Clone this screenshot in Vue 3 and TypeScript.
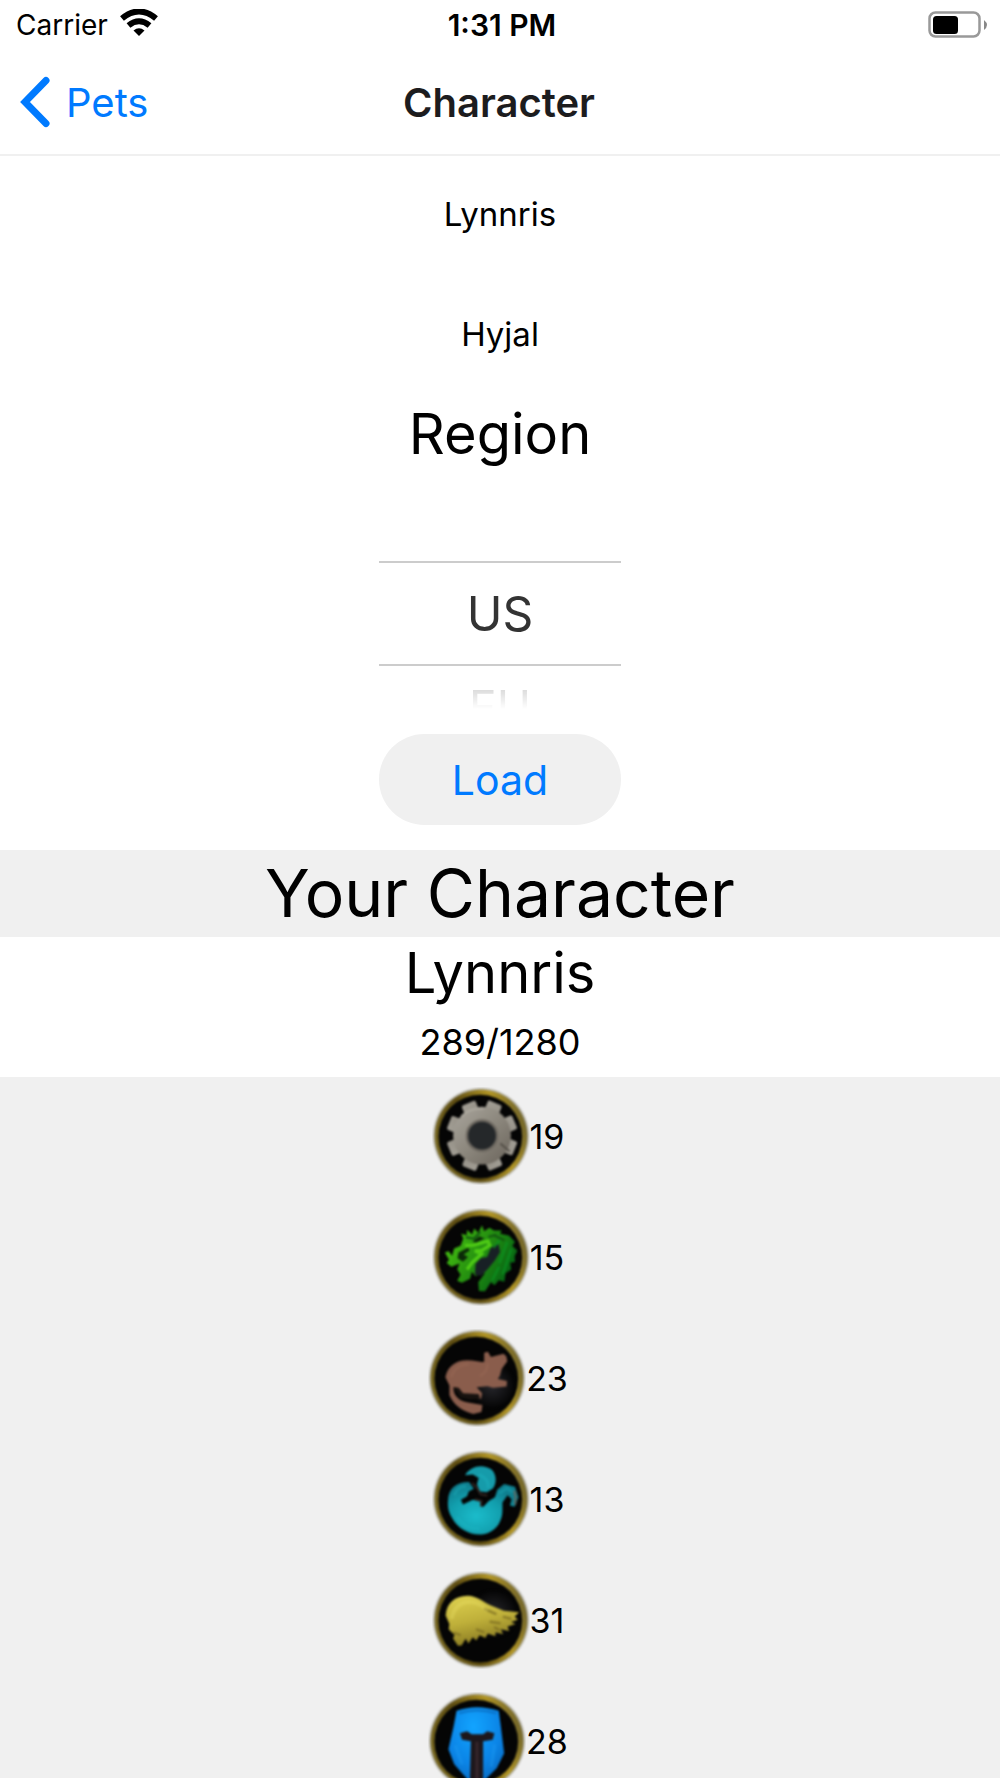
<script setup lang="ts">
import { ref } from 'vue'

type Family = 'mechanical' | 'dragonkin' | 'critter' | 'magic' | 'beast' | 'humanoid'

interface PetCount {
  family: Family
  count: number
  cx: number
  cy: number
}

const characterName = ref('Lynnris')
const realm = ref('Hyjal')
const region = ref('US')

const families: PetCount[] = [
  { family: 'mechanical', count: 19, cx: 178, cy: 168 },
  { family: 'dragonkin', count: 15, cx: 178, cy: 170 },
  { family: 'critter', count: 23, cx: 175, cy: 172 },
  { family: 'magic', count: 13, cx: 178, cy: 175 },
  { family: 'beast', count: 31, cx: 178, cy: 178 },
  { family: 'humanoid', count: 28, cx: 172, cy: 180 },
]

const teeth = [0, 45, 90, 135, 180, 225, 270, 315]
</script>

<template>
  <div class="screen">
    <header>
      <div class="status">
        <div class="carrier">
          <span>Carrier</span>
          <svg width="38" height="28" viewBox="0 0 38 28" aria-hidden="true">
            <path d="M2 9.500Q19-4.500 36 9.500" fill="none" stroke="#000" stroke-width="6" />
            <path d="M8.500 16.500Q19 8 29.500 16.500" fill="none" stroke="#000" stroke-width="6" />
            <path d="M13.500 21.500Q19 17 24.500 21.500L19 27Z" />
          </svg>
        </div>
        <time>1:31 PM</time>
        <div class="power">
          <svg width="60" height="28" viewBox="0 0 60 28" aria-hidden="true">
            <rect x="1.500" y="1.500" width="50" height="24" rx="6" fill="none" stroke="#999" stroke-width="2.500" />
            <rect x="5" y="5" width="25" height="18" rx="3.500" />
            <path d="M56 9Q62 14 56 19Z" fill="#888" />
          </svg>
        </div>
      </div>
      <nav>
        <a class="back" href="#pets">
          <svg width="32" height="52" viewBox="0 0 32 52" aria-hidden="true">
            <path d="M28 4.500L7 26L28 47.500" fill="none" stroke="#007aff" stroke-width="7" stroke-linecap="round" stroke-linejoin="miter" />
          </svg>
          <span>Pets</span>
        </a>
        <h1>Character</h1>
      </nav>
    </header>

    <main>
      <form @submit.prevent>
        <input v-model="characterName" class="field" type="text" aria-label="Character name" />
        <input v-model="realm" class="field" type="text" aria-label="Realm" />
        <label class="region-label" for="region">Region</label>
        <div class="wheel">
          <select id="region" v-model="region">
            <option>US</option>
            <option>EU</option>
          </select>
          <span class="next" aria-hidden="true">EU</span>
        </div>
        <button type="submit">Load</button>
      </form>

      <h2>Your Character</h2>
      <section class="summary">
        <h3>Lynnris</h3>
        <p>289/1280</p>
      </section>

      <ul>
        <li v-for="pet in families" :key="pet.family">
          <svg
            class="emblem"
            :viewBox="`${pet.cx - 144} ${pet.cy - 144} 288 288`"
            role="img"
            :aria-label="pet.family"
          >
            <defs>
              <linearGradient :id="`rim-${pet.family}`" x1="0" y1="0.600" x2="1" y2="0.300">
                <stop offset="0" stop-color="#75651f" />
                <stop offset="0.350" stop-color="#5e4d12" />
                <stop offset="0.700" stop-color="#b09424" />
                <stop offset="1" stop-color="#6b602c" />
              </linearGradient>
              <linearGradient id="steel" gradientUnits="userSpaceOnUse" x1="110" y1="95" x2="250" y2="240">
                <stop offset="0" stop-color="#a5a198" />
                <stop offset="0.500" stop-color="#8c877d" />
                <stop offset="1" stop-color="#6f6960" />
              </linearGradient>
              <linearGradient id="scale" x1="0" y1="0" x2="1" y2="0.500">
                <stop offset="0" stop-color="#4fd012" />
                <stop offset="0.450" stop-color="#2c9a10" />
                <stop offset="1" stop-color="#066614" />
              </linearGradient>
              <radialGradient id="orb" cx="0.400" cy="0.650" r="0.600">
                <stop offset="0" stop-color="#1bbccb" />
                <stop offset="0.600" stop-color="#129fae" />
                <stop offset="1" stop-color="#0f7f8f" />
              </radialGradient>
              <linearGradient id="claw" x1="0.200" y1="0" x2="0.500" y2="1">
                <stop offset="0" stop-color="#dccf4e" />
                <stop offset="0.500" stop-color="#bfb03a" />
                <stop offset="1" stop-color="#857620" />
              </linearGradient>
              <radialGradient id="visor" cx="0.450" cy="0.250" r="0.800">
                <stop offset="0" stop-color="#12a4ff" />
                <stop offset="0.600" stop-color="#0b84e6" />
                <stop offset="1" stop-color="#0767bd" />
              </radialGradient>
              <radialGradient id="sheen">
                <stop offset="0" stop-color="#26262b" />
                <stop offset="1" stop-color="#050505" />
              </radialGradient>
            </defs>

            <g class="soft">
              <circle :cx="pet.cx" :cy="pet.cy" r="141" fill="#8d8a78" opacity="0.600" />
              <circle :cx="pet.cx" :cy="pet.cy" r="136" :fill="`url(#rim-${pet.family})`" />
              <circle :cx="pet.cx - 2" :cy="pet.cy + 2" r="123" fill="#050505" />
            </g>

            <g v-if="pet.family === 'mechanical'" class="soft">
              <g fill="url(#steel)">
                <rect
                  v-for="angle in teeth"
                  :key="angle"
                  x="159"
                  y="63"
                  width="44"
                  height="50"
                  rx="6"
                  :transform="`rotate(${angle + 22} 181 167)`"
                />
                <circle cx="181" cy="167" r="85" />
              </g>
              <circle cx="181" cy="167" r="48" fill="#6d6860" />
              <circle cx="181" cy="167" r="41" fill="#25282a" />
              <path d="M120 110Q145 85 185 88" fill="none" stroke="#b8b3aa" stroke-width="7" opacity="0.500" />
              <path d="M235 190L262 213" stroke="#514c45" stroke-width="5" />
            </g>

            <g v-else-if="pet.family === 'dragonkin'" class="soft">
              <path
                d="M72 157L83 153L93 166L99 145L118 137L126 116L120 102L136 106L137 91L152 104L158 86L170 99L181 77L187 94L203 84L216 92L239 92L234 102L260 107L278 126L270 137L285 152L277 167L278 185L264 187L267 207L250 218L247 243L230 238L218 253L207 244L190 271L172 270L170 244L190 217L161 226L151 213L146 234L122 246L108 240L118 222L108 206L115 189L91 199L77 188L84 178Z"
                fill="url(#scale)"
              />
              <path d="M207 143L229 132L234 155L218 181L198 205L179 225L160 222L162 190L178 173L196 170Z" fill="#182025" />
              <path d="M112 157L140 143L145 151L127 163L140 170L125 184L109 174ZM153 125L173 109L188 116L164 128Z" fill="#0b2a08" />
              <path d="M131 136L157 135L198 123L204 136L180 151L160 152L180 161L153 185L137 207" fill="none" stroke="#4fcb15" stroke-width="10" />
              <path d="M234 119L215 144M255 126L232 188M267 147L242 221M231 199L211 239" fill="none" stroke="#0a9a24" stroke-width="7" opacity="0.600" />
              <path d="M133 112L158 116L176 96M200 111L223 105M214 105L247 121" fill="none" stroke="#145b10" stroke-width="7" />
            </g>

            <g v-else-if="pet.family === 'critter'" class="soft">
              <circle cx="220" cy="195" r="66" fill="url(#sheen)" />
              <path
                d="M82 170C88 137 115 119 148 120C170 120 183 127 196 124L196 98L207 95L216 110L253 101L261 108L264 123L248 145L242 166L236 175L263 181L262 197L222 201L206 196L174 199L190 217L187 233L164 234L151 222L126 221L119 202L106 199C104 222 122 240 149 244L191 251L188 272L164 278C133 270 105 251 94 222L94 194Z"
                fill="#8a5d4c"
              />
              <path d="M106 199L121 201L134 217L180 219L184 233L153 235L126 229Z" fill="#17120f" />
              <path d="M145 207L181 213" stroke="#8a5d4c" stroke-width="12" />
              <path d="M99 170Q110 132 151 132M206 129Q205 157 183 166" fill="none" stroke="#9c6b58" stroke-width="8" opacity="0.400" />
            </g>

            <g v-else-if="pet.family === 'magic'" class="soft">
              <path d="M131 105C149 75 186 72 210 89C225 104 224 133 212 145L195 155L174 153L166 132L171 113L154 103Z" fill="#169baa" />
              <path
                d="M81 179C82 143 107 124 143 125L157 145L142 153L137 167L119 177L125 191L154 177L177 181L183 200L201 181L219 170L226 147L246 131L278 139L288 170L277 198L263 194L268 176L256 164L241 185L241 210C240 246 217 276 180 279C143 282 108 260 93 231C83 214 79 202 81 179Z"
                fill="url(#orb)"
              />
              <path d="M171 103Q200 113 200 143M99 164Q108 137 135 138M232 158L254 143L272 155M107 228Q129 264 174 264" fill="none" stroke="#22bccb" stroke-width="9" opacity="0.300" />
              <path d="M152 128L166 142L177 161L197 165M160 176L179 181L178 197" fill="none" stroke="#30231f" stroke-width="6" />
              <path d="M276 150Q282 170 278 192" fill="none" stroke="#5d665f" stroke-width="6" />
            </g>

            <g v-else-if="pet.family === 'beast'" class="soft">
              <circle cx="215" cy="160" r="70" fill="url(#sheen)" />
              <path
                d="M74 165C77 127 101 108 138 107C168 107 188 129 211 137L245 151L290 155L277 168L286 177L266 184L280 190L256 197L261 210L236 205L243 220L221 214L220 226L198 218L191 231L174 223L164 238L154 229L141 247L133 233L121 253L110 254L96 232L100 222L83 205L85 190Z"
                fill="url(#claw)"
              />
              <path d="M190 146L221 160M206 183L233 187M166 206L185 213M219 200L230 207M245 169L264 174M99 216L116 222" stroke="#7a6b20" stroke-width="7" stroke-linecap="round" opacity="0.700" />
              <path d="M91 175Q101 128 141 125Q175 124 197 151" fill="none" stroke="#eee66a" stroke-width="12" opacity="0.300" />
            </g>

            <g v-else class="soft">
              <path d="M112 91Q171 70 236 91L242 137L252 216L230 260L190 300L177 310L150 300L105 248L88 204L103 138Z" fill="url(#visor)" />
              <path d="M122 157L143 151L156 160L190 160L202 151L223 157L218 176L190 181L190 307L151 307L154 181L128 176Z" fill="#1d171b" />
              <path d="M172 182V305" stroke="#35242a" stroke-width="10" />
              <path d="M119 98Q171 82 229 98" fill="none" stroke="#086bbd" stroke-width="7" opacity="0.700" />
              <path d="M108 193L128 249M224 190L214 256" stroke="#23a2f5" stroke-width="10" opacity="0.300" />
            </g>
          </svg>
          <span>{{ pet.count }}</span>
        </li>
      </ul>
    </main>
  </div>
</template>

<style>
body {
  margin: 0;
  background: #fff;
}
</style>

<style scoped>
.screen {
  display: flex;
  flex-direction: column;
  height: 100vh;
  overflow: hidden;
  background: #fff;
  color: #000;
  font-family: Inter, "Liberation Sans", sans-serif;
  font-size: 34px;
}

header {
  flex: none;
  border-bottom: 2px solid #f0f0f0;
}

.status,
nav {
  display: grid;
  grid-template-columns: 1fr auto 1fr;
  align-items: center;
}

.status {
  height: 50px;
  padding: 0 12px 0 16px;
  font-size: 28px;
}

.carrier {
  display: flex;
  align-items: center;
  gap: 12px;
}

.carrier svg {
  margin-bottom: 4px;
}

time {
  font-size: 30px;
  font-weight: 600;
}

.power {
  display: flex;
  justify-content: flex-end;
}

nav {
  height: 104px;
  padding: 0 20px 0 18px;
}

.back {
  display: flex;
  align-items: center;
  gap: 16px;
  color: #007aff;
  font-size: 40px;
  text-decoration: none;
}

h1,
h2,
h3,
p,
ul {
  margin: 0;
  font-weight: 400;
}

h1 {
  color: #1c1c1e;
  font-size: 40px;
  font-weight: 600;
}

main {
  flex: 1;
  min-height: 0;
  overflow: hidden;
}

form {
  display: flex;
  flex-direction: column;
  align-items: center;
}

.field {
  box-sizing: border-box;
  width: 100%;
  height: 120px;
  padding: 0 0 4px;
  border: 0;
  background: none;
  color: inherit;
  font: inherit;
  font-size: 33px;
  text-align: center;
}

.region-label {
  font-size: 56px;
  line-height: 76px;
}

.wheel {
  display: flex;
  flex-direction: column;
  align-items: center;
  width: 242px;
  height: 150px;
  margin-top: 89px;
  overflow: hidden;
  mask-image: linear-gradient(#000 116px, transparent 148px);
}

select {
  flex: none;
  box-sizing: border-box;
  width: 100%;
  height: 105px;
  padding: 0;
  appearance: none;
  border: 0;
  border-top: 2px solid #ccc;
  border-bottom: 2px solid #ccc;
  border-radius: 0;
  background: none;
  color: #333;
  font: inherit;
  font-size: 48px;
  text-align: center;
  text-align-last: center;
}

.next {
  color: #c4c4c4;
  font-size: 46px;
  line-height: 82px;
}

button {
  width: 242px;
  height: 91px;
  margin: 23px 0 25px;
  padding: 0;
  border: 0;
  border-radius: 46px;
  background: #f0f0f0;
  color: #007aff;
  font: inherit;
  font-size: 41px;
}

h2 {
  background: #f0f0f0;
  font-size: 66px;
  line-height: 87px;
  text-align: center;
}

.summary {
  padding-bottom: 2px;
  text-align: center;
}

h3 {
  font-size: 56px;
  line-height: 72px;
}

p {
  font-size: 36px;
  line-height: 66px;
}

ul {
  padding: 0;
  background: #f0f0f0;
  list-style: none;
}

li {
  box-sizing: border-box;
  display: flex;
  align-items: center;
  justify-content: center;
  height: 121px;
  padding: 0 4px 3px 0;
}

.emblem {
  width: 98px;
  height: 98px;
}

.soft {
  filter: blur(3px);
}
</style>
